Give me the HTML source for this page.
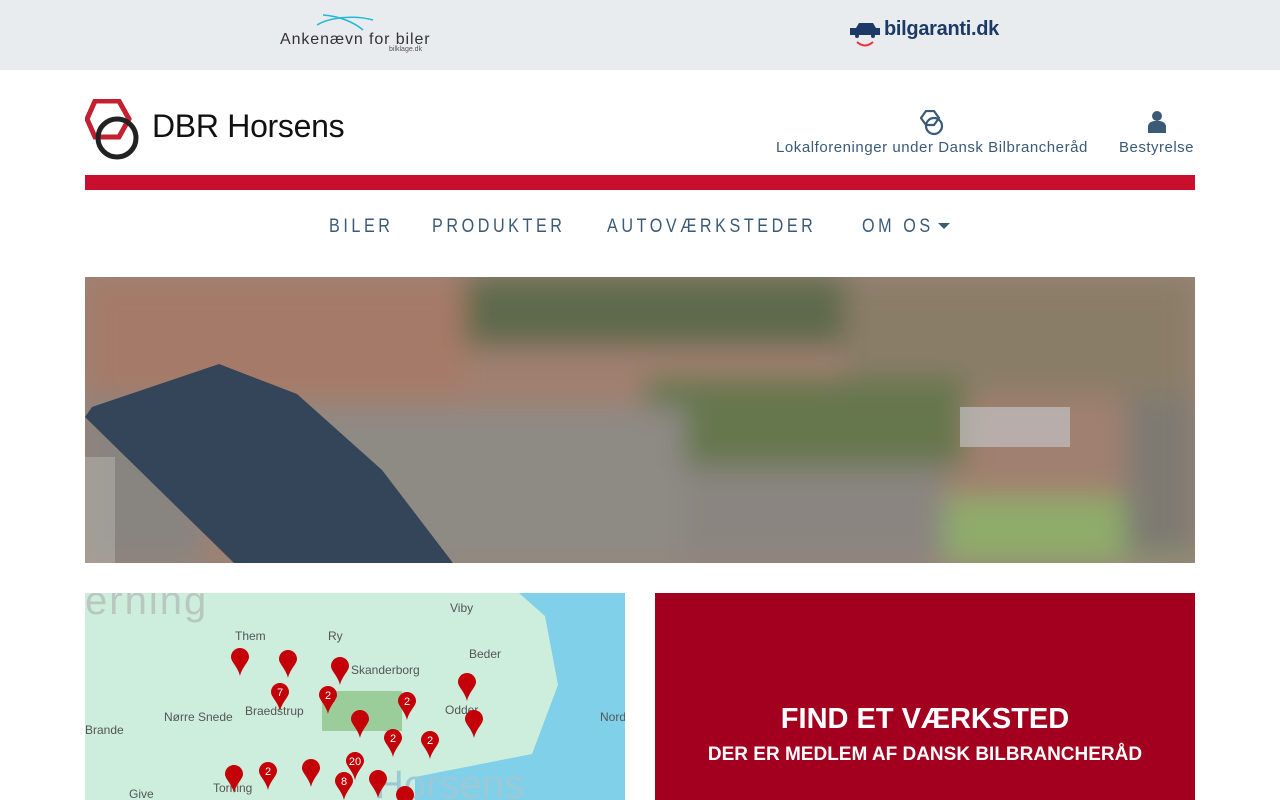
<!DOCTYPE html>
<html><head><meta charset="utf-8"><style>
*{margin:0;padding:0;box-sizing:border-box}
body{width:1280px;height:800px;overflow:hidden;background:#fff;font-family:"Liberation Sans",sans-serif;position:relative}
.top{position:absolute;left:0;top:0;width:1280px;height:70px;background:#e9ecef}
.abs{position:absolute}
.nav a{position:absolute;top:216px;font-size:19px;letter-spacing:4.2px;color:#3b5a78;text-decoration:none;transform:scaleX(0.85);transform-origin:left;white-space:nowrap}
</style></head><body>
<div class="top"></div>
<svg class="abs" style="left:315px;top:13px" width="60" height="18"><path d="M2 12 C15 4 40 2 58 7" stroke="#22b8d8" stroke-width="1.5" fill="none"/><path d="M8 2 C25 3 40 10 48 17" stroke="#22b8d8" stroke-width="1.5" fill="none"/></svg>
<div class="abs" style="left:280px;top:31px;font-size:16px;color:#333;letter-spacing:.9px">Ankenævn for biler</div>
<div class="abs" style="left:389px;top:46px;font-size:7px;color:#555">bilklage.dk</div>
<svg class="abs" style="left:850px;top:22px" width="32" height="27"><path d="M0 6h6l3-5h14l3 5h4v7H0z" fill="#1d3a66"/><circle cx="7" cy="14" r="2" fill="#1d3a66"/><circle cx="23" cy="14" r="2" fill="#1d3a66"/><path d="M7 20q8 7 16 0" stroke="#e8333f" stroke-width="2" fill="none"/></svg>
<div class="abs" style="left:884px;top:18px;font-size:20px;font-weight:bold;color:#1d3a66;letter-spacing:-.3px">bilgaranti.dk</div>

<svg class="abs" style="left:85px;top:99px" width="60" height="62"><polygon points="10,2 34,2 44,20 34,38 10,38 2,20" fill="none" stroke="#c4202f" stroke-width="5"/><circle cx="32" cy="39" r="19" fill="none" stroke="#222" stroke-width="5"/></svg>
<div class="abs" style="left:152px;top:108px;font-size:32px;color:#111;letter-spacing:-.3px">DBR Horsens</div>

<svg class="abs" style="left:920px;top:110px" width="26" height="27"><polygon points="6,1 14,1 19,8 14,15 6,15 1,8" fill="none" stroke="#3b5a78" stroke-width="2.2"/><circle cx="14" cy="16" r="8" fill="none" stroke="#3b5a78" stroke-width="2.2"/></svg>
<div class="abs" style="left:776px;top:139px;font-size:15px;color:#3b5a78;letter-spacing:.55px">Lokalforeninger under Dansk Bilbrancheråd</div>
<svg class="abs" style="left:1147px;top:110px" width="20" height="24"><circle cx="10" cy="6" r="5" fill="#3b5a78"/><path d="M1 23v-6q0-5 6-6h6q6 1 6 6v6z" fill="#3b5a78"/></svg>
<div class="abs" style="left:1119px;top:139px;font-size:15px;color:#3b5a78;letter-spacing:.5px">Bestyrelse</div>

<div class="abs" style="left:85px;top:175px;width:1110px;height:15px;background:#c8102e"></div>
<div class="nav"><a style="left:329px">BILER</a><a style="left:432px">PRODUKTER</a><a style="left:607px">AUTOVÆRKSTEDER</a><a style="left:862px">OM OS</a></div>
<div class="abs" style="left:938px;top:223px;border:6px solid transparent;border-top:6px solid #3b5a78;border-bottom:0"></div>

<div class="abs" style="left:85px;top:277px;width:1110px;height:286px;overflow:hidden;background:#9a8478">
<svg width="1110" height="286" class="abs" style="left:0;top:0">
<defs><filter id="b"><feGaussianBlur stdDeviation="14"/></filter></defs>
<g filter="url(#b)">
<rect x="0" y="0" width="1110" height="286" fill="#a08070"/>
<rect x="380" y="0" width="380" height="70" fill="#5e6a4c"/>
<rect x="760" y="0" width="350" height="120" fill="#8a7d68"/>
<rect x="560" y="100" width="320" height="90" fill="#66774e"/>
<rect x="180" y="130" width="420" height="156" fill="#8e8a84"/>
<rect x="600" y="190" width="260" height="96" fill="#8a8580"/>
<rect x="860" y="220" width="250" height="66" fill="#8fac6a"/>
<rect x="1040" y="120" width="70" height="160" fill="#7e7a72"/>
<rect x="0" y="40" width="120" height="246" fill="#888480"/>
<rect x="0" y="0" width="380" height="120" fill="#a67a68"/>
</g>
<polygon points="7,130 134,87 212,117 297,193 368,286 149,286 0,140" fill="#34455a"/>
<rect x="0" y="180" width="30" height="106" fill="#b8b6b0" opacity=".5"/>
<rect x="875" y="130" width="110" height="40" fill="#c8ccd0" opacity=".6"/>
</svg>
</div>

<div class="abs" style="left:85px;top:593px;width:540px;height:207px;background:#cdeedd;overflow:hidden">
<div class="abs" style="left:330px;top:0;width:260px;height:230px;background:#7fd0e8;clip-path:polygon(40% 0,100% 0,100% 100%,0 100%,0 80%,45% 70%,55% 40%,50% 10%)"></div>
<div class="abs" style="left:0;top:-14px;font-size:40px;color:#b8c8c0;letter-spacing:2px">erning</div>
<div class="abs" style="left:150px;top:36px;font-size:12px;color:#555">Them</div>
<div class="abs" style="left:243px;top:36px;font-size:12px;color:#555">Ry</div>
<div class="abs" style="left:365px;top:8px;font-size:12px;color:#555">Viby</div>
<div class="abs" style="left:384px;top:54px;font-size:12px;color:#555">Beder</div>
<div class="abs" style="left:266px;top:70px;font-size:12px;color:#555">Skanderborg</div>
<div class="abs" style="left:160px;top:111px;font-size:12px;color:#555">Braedstrup</div>
<div class="abs" style="left:79px;top:117px;font-size:12px;color:#555">Nørre Snede</div>
<div class="abs" style="left:0;top:130px;font-size:12px;color:#555">Brande</div>
<div class="abs" style="left:360px;top:110px;font-size:12px;color:#555">Odder</div>
<div class="abs" style="left:515px;top:117px;font-size:12px;color:#555">Nord</div>
<div class="abs" style="left:128px;top:188px;font-size:12px;color:#555">Torning</div>
<div class="abs" style="left:44px;top:194px;font-size:12px;color:#555">Give</div>
<div class="abs" style="left:290px;top:170px;font-size:40px;color:#9cc8d8">Horsens</div>
<div class="abs" style="left:237px;top:98px;width:80px;height:40px;background:#8fc48a;opacity:.8"></div>
<svg width="540" height="207" class="abs" style="left:0;top:0">
<defs><path id="p" d="M9 0C4 0 0 4 0 9C0 14 7 19 9 28C11 19 18 14 18 9C18 4 14 0 9 0z" fill="#c40008"/></defs>
<g><use href="#p" x="146" y="55"/><use href="#p" x="194" y="57"/><use href="#p" x="246" y="64"/><use href="#p" x="373" y="80"/><use href="#p" x="186" y="90"/><use href="#p" x="234" y="93"/><use href="#p" x="313" y="99"/><use href="#p" x="266" y="117"/><use href="#p" x="380" y="117"/><use href="#p" x="299" y="136"/><use href="#p" x="336" y="138"/><use href="#p" x="261" y="159"/><use href="#p" x="140" y="172"/><use href="#p" x="174" y="169"/><use href="#p" x="217" y="166"/><use href="#p" x="250" y="179"/><use href="#p" x="284" y="177"/><use href="#p" x="311" y="193"/></g>
<g fill="#fff" font-size="11" text-anchor="middle" font-family="Liberation Sans"><text x="195" y="103">7</text><text x="243" y="106">2</text><text x="322" y="112">2</text><text x="308" y="149">2</text><text x="345" y="151">2</text><text x="270" y="172">20</text><text x="183" y="182">2</text><text x="259" y="192">8</text></g>
</svg>
</div>

<div class="abs" style="left:655px;top:593px;width:540px;height:207px;background:#a3001f;color:#fff;text-align:center">
<div style="margin-top:110px;font-size:29px;font-weight:bold">FIND ET VÆRKSTED</div>
<div style="margin-top:8px;font-size:19px;font-weight:bold">DER ER MEDLEM AF DANSK BILBRANCHERÅD</div>
</div>
</body></html>
